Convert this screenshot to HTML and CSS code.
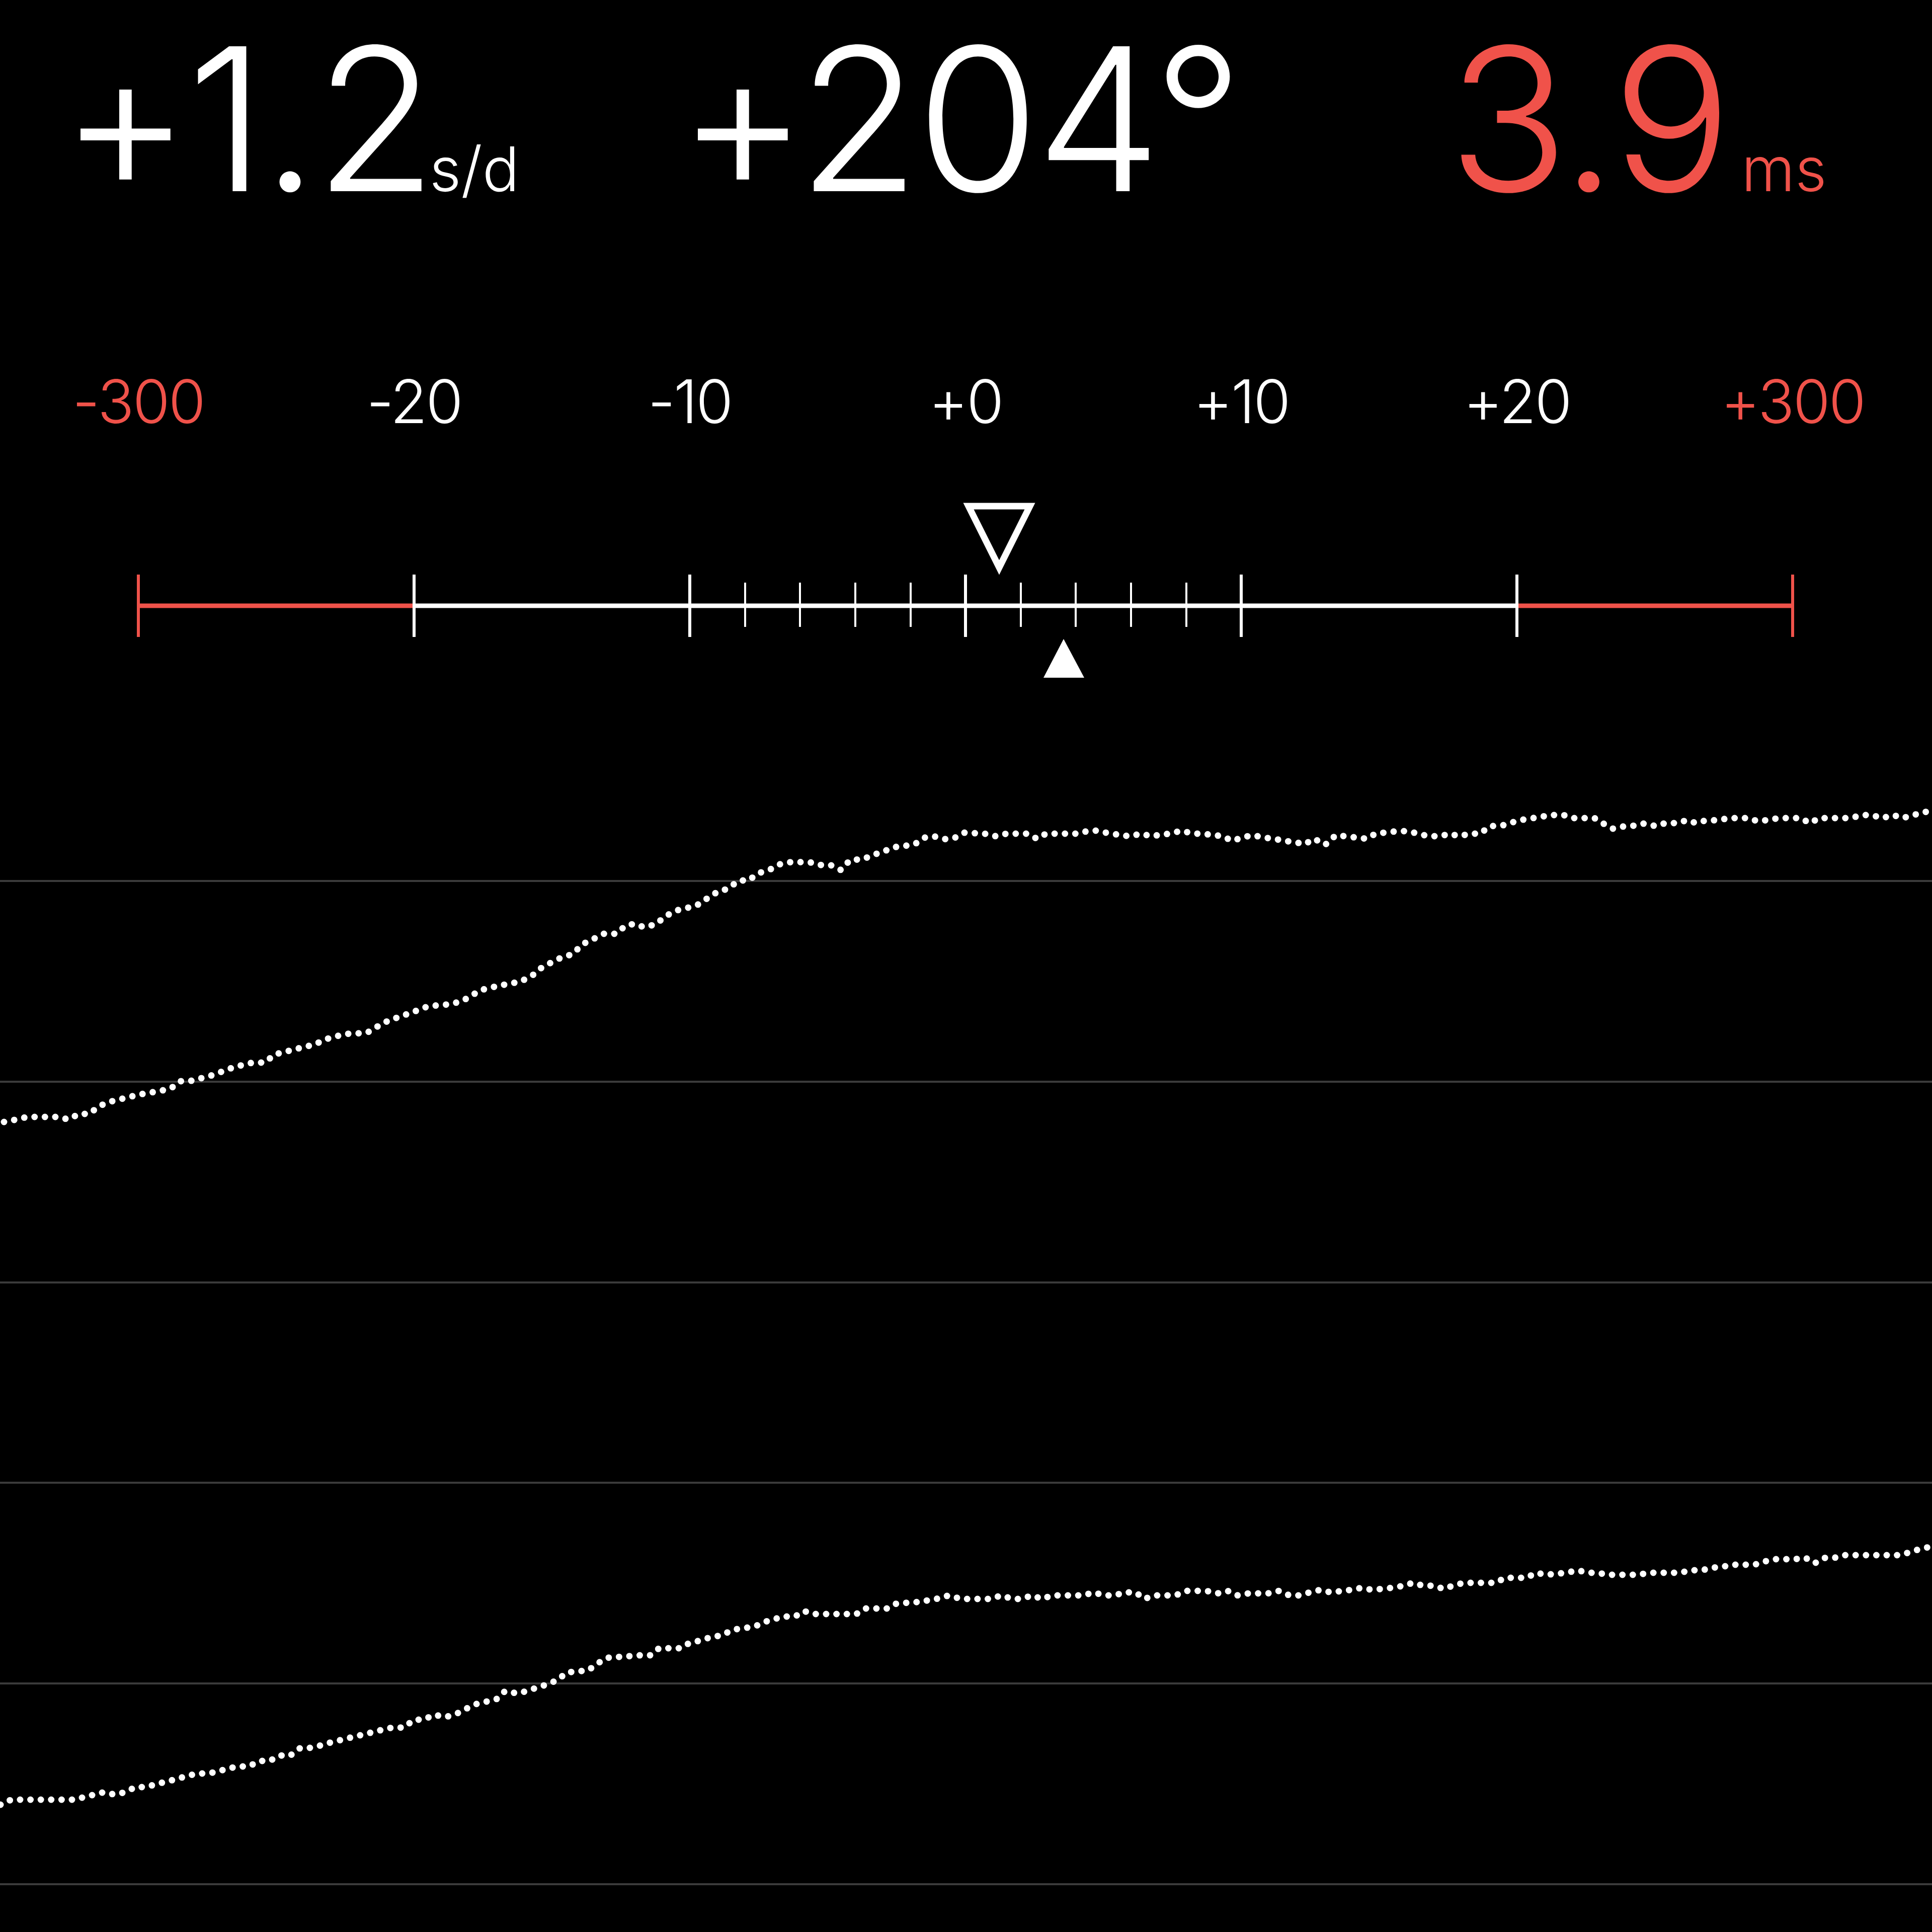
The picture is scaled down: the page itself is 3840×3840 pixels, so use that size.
FILE: index.html
```html
<!DOCTYPE html>
<html>
    <head>
        <title>Timegrapher</title>
        <meta charset="UTF-8">
        <link rel="stylesheet" href="styles.css">
    </head>
    <body>
        <div class="readouts">
            <div class="readout"><span class="value">+1.2</span><span class="unit rate">s/d</span></div>
            <div class="readout"><span class="value">+204°</span></div>
            <div class="readout alert"><span class="value">3.9</span><span class="unit beat">ms</span></div>
        </div>

        <div class="scale-labels">
            <span class="alert">-300</span>
            <span>-20</span>
            <span>-10</span>
            <span>+0</span>
            <span>+10</span>
            <span>+20</span>
            <span class="alert">+300</span>
        </div>

        <!-- escala: coordenadas de la pagina (y 960 - 1380) -->
        <svg class="scale" viewBox="0 960 3840 420">
            <line class="bar red" x1="275" y1="1204" x2="823" y2="1204"/>
            <line class="bar" x1="823" y1="1204" x2="3015" y2="1204"/>
            <line class="bar red" x1="3015" y1="1204" x2="3563" y2="1204"/>

            <line class="tick red" x1="275" y1="1142" x2="275" y2="1266"/>
            <line class="tick" x1="823" y1="1142" x2="823" y2="1266"/>
            <line class="tick" x1="1371" y1="1142" x2="1371" y2="1266"/>
            <line class="tick" x1="1919" y1="1142" x2="1919" y2="1266"/>
            <line class="tick" x1="2467" y1="1142" x2="2467" y2="1266"/>
            <line class="tick" x1="3015" y1="1142" x2="3015" y2="1266"/>
            <line class="tick red" x1="3563" y1="1142" x2="3563" y2="1266"/>

            <line class="minor" x1="1481" y1="1158" x2="1481" y2="1246"/>
            <line class="minor" x1="1590" y1="1158" x2="1590" y2="1246"/>
            <line class="minor" x1="1700" y1="1158" x2="1700" y2="1246"/>
            <line class="minor" x1="1810" y1="1158" x2="1810" y2="1246"/>
            <line class="minor" x1="2029" y1="1158" x2="2029" y2="1246"/>
            <line class="minor" x1="2138" y1="1158" x2="2138" y2="1246"/>
            <line class="minor" x1="2248" y1="1158" x2="2248" y2="1246"/>
            <line class="minor" x1="2358" y1="1158" x2="2358" y2="1246"/>

            <polygon class="pointer-avg" points="1925,1006 2047,1006 1986,1128"/>
            <polygon class="pointer-now" points="2114,1270 2074,1347 2155,1347"/>
        </svg>

        <!-- grafica: coordenadas de la pagina (y 1380 - 3840) -->
        <svg class="chart" viewBox="0 1380 3840 2460">
            <line class="grid" x1="0" y1="1751" x2="3840" y2="1751"/>
            <line class="grid" x1="0" y1="2150" x2="3840" y2="2150"/>
            <line class="grid" x1="0" y1="2549" x2="3840" y2="2549"/>
            <line class="grid" x1="0" y1="2947" x2="3840" y2="2947"/>
            <line class="grid" x1="0" y1="3346" x2="3840" y2="3346"/>
            <line class="grid" x1="0" y1="3745" x2="3840" y2="3745"/>

            <polyline class="trace" points="8,2230 33,2225 54,2220 115,2220 136,2225 157,2214 177,2214 198,2198 218,2190 238,2185 279,2175 320,2168 340,2163 358,2149 381,2148 400,2143 422,2137 465,2121 502,2112 527,2112 545,2096 588,2085 625,2076 649,2065 686,2055 729,2053 747,2042 771,2029 808,2016 833,2007 851,2000 894,1996 918,1990 937,1979 955,1968 992,1959 1035,1951 1059,1938 1078,1922 1114,1904 1139,1896 1157,1877 1182,1865 1200,1856 1225,1856 1243,1840 1261,1836 1280,1843 1304,1837 1322,1821 1347,1809 1384,1800 1402,1788 1427,1772 1445,1767 1469,1750 1488,1750 1506,1736 1531,1728 1549,1718 1574,1713 1610,1714 1635,1720 1653,1720 1671,1729 1690,1709 1714,1708 1739,1698 1757,1692 1776,1684 1800,1681 1818,1678 1837,1665 1855,1662 1880,1668 1898,1665 1916,1655 1957,1657 1979,1662 2000,1657 2042,1657 2061,1667 2079,1657 2140,1657 2165,1651 2183,1651 2202,1656 2244,1662 2269,1657 2287,1662 2324,1657 2349,1651 2367,1656 2410,1659 2428,1662 2450,1671 2471,1664 2489,1660 2514,1665 2532,1667 2551,1671 2575,1674 2593,1678 2612,1667 2634,1679 2655,1660 2673,1662 2698,1665 2716,1667 2734,1657 2777,1652 2796,1652 2820,1657 2838,1662 2863,1662 2881,1657 2900,1662 2922,1657 2942,1657 2961,1642 2985,1641 3004,1635 3022,1630 3047,1626 3083,1620 3108,1620 3126,1626 3169,1626 3187,1637 3206,1647 3230,1642 3249,1641 3267,1637 3291,1642 3310,1636 3334,1636 3353,1630 3371,1636 3389,1631 3414,1630 3438,1626 3475,1626 3493,1632 3512,1630 3536,1626 3579,1626 3597,1636 3616,1626 3677,1626 3702,1620 3720,1620 3741,1626 3763,1620 3781,1626 3803,1620 3824,1614 3845,1612"/>

            <polyline class="trace" points="1,3587 22,3577 147,3577 167,3572 187,3567 207,3562 228,3567 249,3562 269,3552 290,3552 311,3546 331,3541 351,3536 371,3530 392,3525 413,3525 433,3521 453,3515 473,3511 494,3511 516,3500 536,3500 556,3489 576,3490 597,3474 617,3474 638,3469 658,3463 679,3458 699,3453 720,3448 740,3443 760,3438 782,3433 802,3434 823,3418 842,3418 863,3408 884,3413 904,3408 925,3397 946,3387 967,3382 987,3377 1004,3361 1029,3366 1047,3361 1065,3355 1090,3347 1108,3339 1127,3324 1169,3320 1188,3306 1206,3295 1273,3290 1292,3290 1310,3276 1353,3276 1371,3265 1396,3260 1414,3253 1433,3251 1457,3239 1500,3233 1518,3224 1537,3219 1555,3213 1580,3213 1598,3202 1616,3208 1702,3208 1720,3197 1763,3197 1782,3187 1825,3184 1843,3181 1861,3178 1886,3171 1910,3178 1969,3178 1990,3171 2012,3178 2030,3178 2051,3171 2071,3178 2091,3171 2153,3171 2173,3165 2196,3171 2214,3171 2236,3165 2257,3165 2275,3178 2293,3171 2336,3171 2358,3162 2398,3162 2420,3167 2440,3162 2459,3171 2481,3167 2520,3167 2542,3162 2563,3171 2581,3171 2603,3165 2624,3160 2645,3165 2685,3160 2706,3156 2728,3160 2765,3156 2789,3152 2808,3146 2826,3151 2851,3152 2869,3158 2890,3151 2909,3146 2973,3146 2991,3136 3034,3136 3053,3126 3073,3130 3114,3126 3135,3121 3157,3126 3175,3126 3196,3130 3255,3130 3279,3126 3340,3126 3359,3121 3383,3121 3402,3116 3424,3114 3444,3110 3487,3110 3506,3104 3524,3099 3567,3099 3588,3096 3607,3107 3628,3096 3647,3096 3665,3091 3775,3091 3793,3086 3812,3080 3833,3075 3845,3072"/>
        </svg>
    </body>
</html>
```

FILE: styles.css
```css
body {
    margin: 0;
    width: 3840px;
    background-color: #000;
    color: #fff;
    font-family: "Inter", "Liberation Sans", sans-serif;
    font-weight: 300;
}

.alert {
    color: #f0524a;
}

/* lecturas grandes */
.readouts {
    display: grid;
    grid-template-columns: 1227px 1531px 1fr;
    height: 700px;
    padding: 38px 0 0 120px;
    box-sizing: border-box;
    line-height: 1;
}
.readout {
    white-space: nowrap;
}
.value {
    font-size: 396px;
    letter-spacing: -7px;
}
.unit {
    font-size: 122px;
}
.unit.rate {
    margin-left: -8px;
}
.unit.beat {
    margin-left: 26px;
}

/* etiquetas de la escala */
.scale-labels {
    display: grid;
    grid-template-columns: repeat(7, 548px);
    height: 260px;
    padding: 38px 0 0 1px;
    box-sizing: border-box;
    font-size: 120px;
    line-height: 1;
    letter-spacing: -3px;
    text-align: center;
}

.scale, .chart {
    display: block;
    width: 3840px;
}
.scale {
    height: 420px;
}
.chart {
    height: 2460px;
}

.bar {
    stroke: #fff;
    stroke-width: 9;
}
.tick {
    stroke: #fff;
    stroke-width: 6;
}
.minor {
    stroke: #fff;
    stroke-width: 4;
}
.bar.red, .tick.red {
    stroke: #f0524a;
}
.pointer-avg {
    fill: none;
    stroke: #fff;
    stroke-width: 13;
}
.pointer-now {
    fill: #fff;
}

.grid {
    stroke: #3b3b3b;
    stroke-width: 4;
}
.trace {
    fill: none;
    stroke: #fff;
    stroke-width: 13;
    stroke-linecap: round;
    stroke-dasharray: 0 20.6;
}
```
